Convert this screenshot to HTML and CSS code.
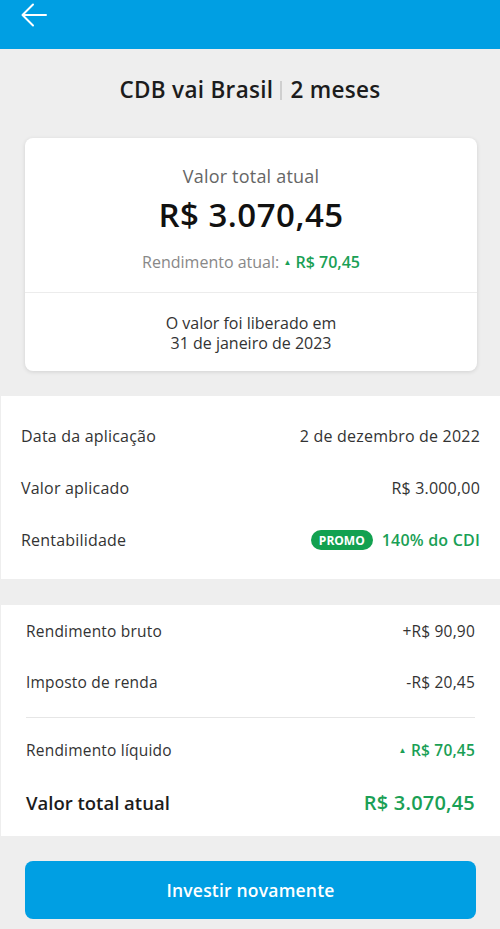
FILE: index.html
```html
<!DOCTYPE html>
<html lang="pt-BR">
<head>
<meta charset="utf-8">
<title>CDB vai Brasil</title>
<link rel="stylesheet" href="styles.css">
</head>
<body>
<header class="topbar">
  <svg class="back" width="28" height="24" viewBox="0 0 28 24" aria-hidden="true">
    <path d="M26 12H3M13 1.5L2.5 12L13 22.5" fill="none" stroke="#fff" stroke-width="2" stroke-linecap="round" stroke-linejoin="round"/>
  </svg>
</header>

<h1 class="title">CDB vai Brasil<span class="sep"></span>2 meses</h1>

<section class="card">
  <div class="card-top">
    <div class="card-label">Valor total atual</div>
    <div class="card-amount">R$ 3.070,45</div>
    <div class="card-yield">Rendimento atual: <span class="up"><span class="tri">▲</span> R$ 70,45</span></div>
  </div>
  <div class="card-bottom">
    <div>O valor foi liberado em</div>
    <div>31 de janeiro de 2023</div>
  </div>
</section>

<section class="panel details">
  <div class="row"><span>Data da aplicação</span><span>2 de dezembro de 2022</span></div>
  <div class="row"><span>Valor aplicado</span><span>R$ 3.000,00</span></div>
  <div class="row"><span>Rentabilidade</span><span class="rate"><span class="badge">PROMO</span><span class="green">140% do CDI</span></span></div>
</section>

<section class="panel summary">
  <div class="row r51"><span>Rendimento bruto</span><span>+R$ 90,90</span></div>
  <div class="row r51"><span>Imposto de renda</span><span>-R$ 20,45</span></div>
  <div class="divider"></div>
  <div class="row r51"><span>Rendimento líquido</span><span class="green"><span class="tri">▲</span> R$ 70,45</span></div>
  <div class="row total"><span class="total-label">Valor total atual</span><span class="green total-value">R$ 3.070,45</span></div>
</section>

<div class="actions">
  <button class="cta">Investir novamente</button>
</div>
</body>
</html>
```

FILE: styles.css
```css
* { box-sizing: border-box; }
html, body { margin: 0; padding: 0; }
body {
  width: 500px;
  min-height: 929px;
  background: #eeeeee;
  font-family: "Open Sans", "Liberation Sans", sans-serif;
  color: #222;
}
.topbar {
  height: 49px;
  background: #009fe3;
  display: flex;
  align-items: flex-start;
  padding: 3px 0 0 20px;
}
.back { display: block; }

.title {
  margin: 0;
  padding-top: 27px;
  height: 89px;
  line-height: 28px;
  font-size: 22.5px;
  letter-spacing: 0.3px;
  font-weight: 600;
  text-align: center;
  color: #1c1c1c;
  display: flex;
  justify-content: center;
  align-items: flex-start;
}
.sep {
  display: inline-block;
  width: 2px;
  height: 19px;
  background: #cfcfcf;
  margin: 5px 8px 0 7px;
}

.card {
  margin: 0 23px 0 25px;
  background: #fff;
  border-radius: 8px;
  box-shadow: 0 1px 4px rgba(0,0,0,0.12);
}
.card-top {
  padding: 26px 0 20px;
  text-align: center;
  border-bottom: 1px solid #ececec;
}
.card-label {
  font-size: 18px;
  letter-spacing: 0.2px;
  line-height: 24px;
  color: #666;
}
.card-amount {
  margin-top: 7px;
  font-size: 33px;
  letter-spacing: 0.5px;
  line-height: 40px;
  font-weight: 600;
  color: #111;
}
.card-yield {
  margin-top: 17px;
  font-size: 16px;
  line-height: 20px;
  color: #888;
}
.up { color: #1aa055; font-weight: 600; }
.tri { font-size: 8px; vertical-align: 3px; }
.card-bottom {
  padding: 20px 0 18px;
  text-align: center;
  font-size: 16px;
  line-height: 20px;
  color: #333;
}

.panel {
  background: #fff;
  margin-top: 25px;
  margin-left: 1px;
}
.details { padding: 14px 20px 13px 20px; }
.summary { margin-top: 26px; padding: 0 25px 7px 25px; }
.row {
  display: flex;
  justify-content: space-between;
  align-items: center;
  height: 52px;
  font-size: 16px;
  letter-spacing: 0.2px;
  color: #333;
}
.summary .row { font-size: 15.5px; }
.r51 { height: 51px; }
.rate { display: flex; align-items: center; gap: 9px; }
.badge {
  display: inline-flex;
  align-items: center;
  height: 20px;
  padding: 0 8px;
  border-radius: 10px;
  background: #12a150;
  color: #fff;
  font-size: 12px;
  letter-spacing: 0;
  font-weight: 700;
}
.green { color: #1aa055; font-weight: 600; }
.divider {
  height: 1px;
  background: #e6e6e6;
  margin: 10px 0 6px;
}
.summary .total {
  height: 54px;
  font-weight: 600;
  color: #1c1c1c;
}
.total-label { font-size: 18.5px; letter-spacing: 0; }
.total-value { font-size: 20px; letter-spacing: 0.2px; }

.actions { padding: 25px 24px 0 25px; }
.cta {
  display: block;
  width: 100%;
  height: 58px;
  border: 0;
  border-radius: 8px;
  background: #009fe3;
  color: #fff;
  font-family: inherit;
  font-size: 17.5px;
  letter-spacing: 0.2px;
  font-weight: 600;
}
```
